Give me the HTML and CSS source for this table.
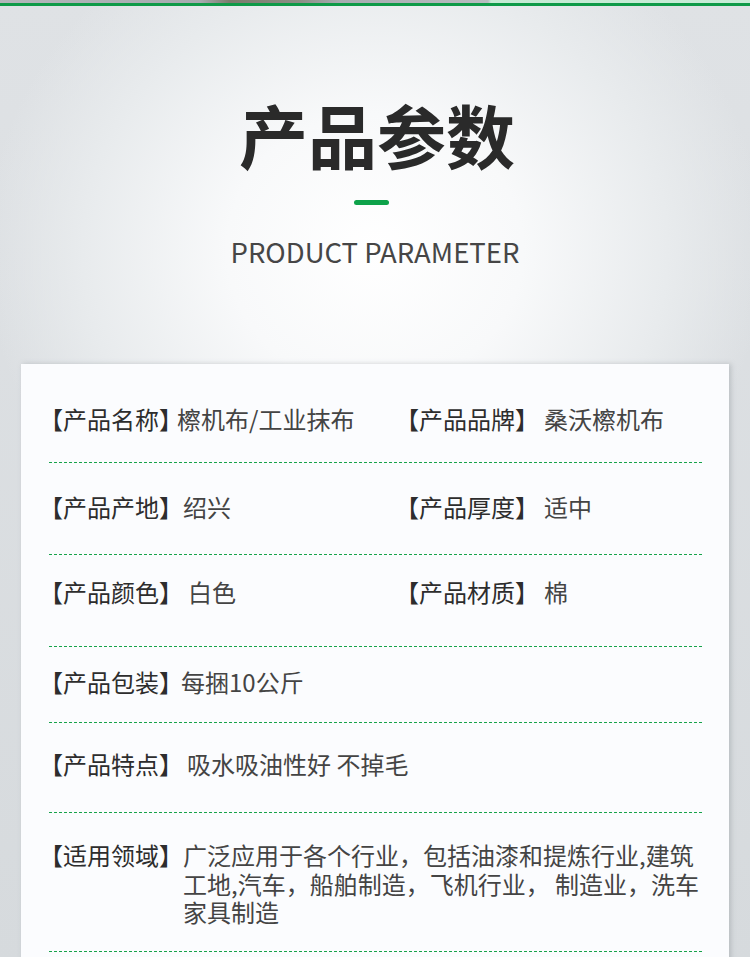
FILE: index.html
```html
<!DOCTYPE html>
<html lang="zh-CN">
<head>
<meta charset="utf-8">
<title>产品参数</title>
<link rel="stylesheet" href="styles.css">
</head>
<body>
<div class="page">
  <div class="topstrip"><div class="photo"></div><div class="greenline"></div></div>
  <header class="head">
    <h1 class="title">产品参数</h1>
    <div class="bar"></div>
    <p class="subtitle">PRODUCT PARAMETER</p>
  </header>
  <section class="card">
    <div class="row r1 two">
      <div class="cell"><span class="label">【产品名称】</span><span class="value">檫机布/工业抹布</span></div>
      <div class="cell"><span class="label">【产品品牌】</span><span class="value rv">桑沃檫机布</span></div>
    </div>
    <div class="row r2 two">
      <div class="cell"><span class="label">【产品产地】</span><span class="value v1">绍兴</span></div>
      <div class="cell"><span class="label">【产品厚度】</span><span class="value rv">适中</span></div>
    </div>
    <div class="row r3 two">
      <div class="cell"><span class="label">【产品颜色】</span><span class="value v2">白色</span></div>
      <div class="cell"><span class="label">【产品材质】</span><span class="value rv">棉</span></div>
    </div>
    <div class="row r4">
      <div class="cell"><span class="label">【产品包装】</span><span class="value v05">每捆10公斤</span></div>
    </div>
    <div class="row r5">
      <div class="cell"><span class="label">【产品特点】</span><span class="value v15">吸水吸油性好 不掉毛</span></div>
    </div>
    <div class="row r6">
      <div class="cell"><span class="label">【适用领域】</span><span class="value v1 multi">广泛应用于各个行业，包括油漆和提炼行业,建筑工地,汽车，船舶制造，飞机行业， 制造业，洗车家具制造</span></div>
    </div>
  </section>
</div>
</body>
</html>
```

FILE: styles.css
```css
html, body {
  margin: 0;
  padding: 0;
}
body {
  width: 750px;
  height: 957px;
  overflow: hidden;
  font-family: "Noto Sans CJK SC", "Noto Sans", sans-serif;
  background: #d7dbde;
}
.page {
  width: 750px;
  min-height: 957px;
  background:
    radial-gradient(ellipse 390px 360px at 375px 250px, #ffffff 0%, #f8f9fa 38%, #e8ebed 75%, rgba(215,219,222,0) 100%),
    linear-gradient(#dfe2e5, #d6dadd);
}
.topstrip {
  height: 6px;
}
.photo {
  height: 3px;
  background: linear-gradient(90deg, #b3b6ba 0, #a7abb0 200px, #7b7b6c 230px, #8d8f86 300px, #a8acb1 340px, #b9bcc0 488px, #c5ead4 491px, #c8ecd7 750px);
}
.greenline {
  height: 3px;
  background: #0e9a48;
}
.head {
  display: flex;
  flex-direction: column;
  align-items: center;
  height: 358px;
}
.title {
  margin: 94px 0 0 4px;
  font-size: 69px;
  line-height: 69px;
  font-weight: 700;
  color: #2a2a2a;
  letter-spacing: 0;
}
.bar {
  width: 35px;
  height: 5px;
  border-radius: 3px;
  background: #0ea24a;
  margin: 31px 8px 0 0;
}
.subtitle {
  margin: 32px 0 0;
  font-size: 27.5px;
  line-height: 28px;
  font-weight: 400;
  color: #464646;
  letter-spacing: 0;
}
.card {
  margin: 0 21px;
  background: #fbfcfe;
  box-shadow: 2px 0 5px rgba(120,128,135,0.35);
  padding: 0 27px 0 28px;
  height: 600px;
}
.row {
  position: relative;
  font-size: 24px;
  line-height: 28px;
}
.row::after {
  content: "";
  display: block;
  height: 1px;
  background: repeating-linear-gradient(90deg, #16a34a 0 3px, transparent 3px 5px);
}
.row.two {
  display: grid;
  grid-template-columns: 356px 1fr;
}
.cell {
  display: flex;
  align-items: flex-start;
}
.two::after {
  grid-column: 1 / -1;
}
.label {
  flex: none;
  color: #2d2d2d;
  margin-left: -10px;
}
.value {
  color: #444;
  margin-left: -6px;
}
.value.v05 { margin-left: -2px; }
.value.v1 { margin-left: 0; }
.value.v15 { margin-left: 4px; }
.value.v2 { margin-left: 5px; }
.value.rv { margin-left: 5px; }
.multi {
  line-height: 28.5px;
  margin-right: -12px;
}
.r1 .cell { padding: 41px 0 29px; }
.r2 .cell { padding: 30px 0 33px; }
.r3 .cell { padding: 23px 0 40px; }
.r4 .cell { padding: 21px 0 26px; }
.r5 .cell { padding: 27px 0 34px; }
.r6 .cell { padding: 28px 0 24px; }
```
